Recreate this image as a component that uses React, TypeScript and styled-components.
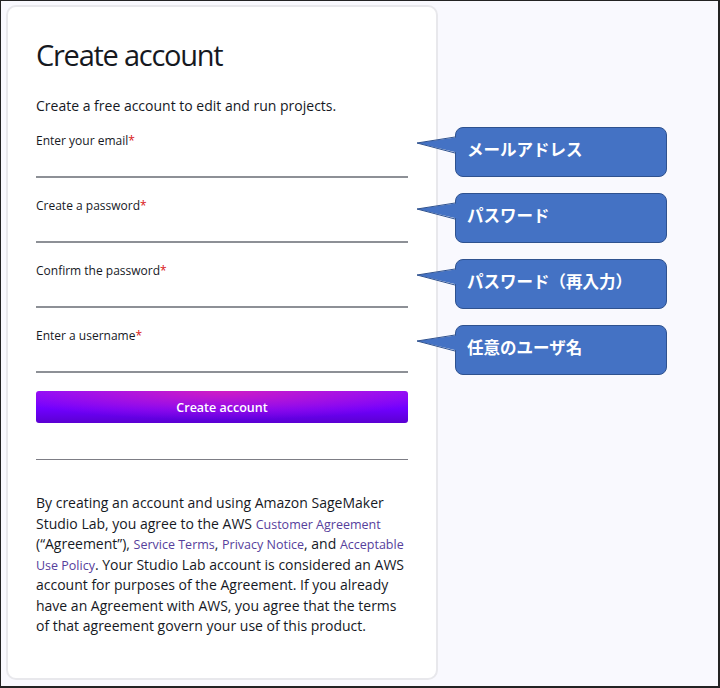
import React from "react"
import styled, { createGlobalStyle } from "styled-components"

// Data
const fields = [
  { id: "email", label: "Enter your email", type: "email" },
  { id: "password", label: "Create a password", type: "password" },
  { id: "confirm", label: "Confirm the password", type: "password" },
  { id: "username", label: "Enter a username", type: "text" },
]

const notes = ["メールアドレス", "パスワード", "パスワード（再入力）", "任意のユーザ名"]

const Callout: React.FC<{ text: string }> = ({ text }) => (
  <Note>
    {text}
    <Tail width="44" height="20" viewBox="0 0 44 20" aria-hidden>
      <polygon points="43,1 1,7 43,17" fill="#4472c4" />
      <polyline points="39,1 1,7 39,17" fill="none" stroke="#2f528f" strokeWidth="1" />
    </Tail>
  </Note>
)

const App: React.FC = () => {
  return (
    <>
      <GlobalStyle />
      <Frame>
        <Card>
          <Title>Create account</Title>
          <Lead>Create a free account to edit and run projects.</Lead>

          <Form onSubmit={(e) => e.preventDefault()}>
            {fields.map(({ id, label, type }) => (
              <Field key={id}>
                <Label htmlFor={id}>
                  {label}
                  <Required>*</Required>
                </Label>
                <Input id={id} type={type} />
              </Field>
            ))}
            <Submit type="submit">Create account</Submit>
          </Form>

          <Divider />

          <Legal>
            By creating an account and using Amazon SageMaker Studio Lab, you agree to the AWS{" "}
            <LegalLink href="#">Customer Agreement</LegalLink> (“Agreement”),{" "}
            <LegalLink href="#">Service Terms</LegalLink>, <LegalLink href="#">Privacy Notice</LegalLink>, and{" "}
            <LegalLink href="#">Acceptable Use Policy</LegalLink>. Your Studio Lab account is considered an AWS
            account for purposes of the Agreement. If you already have an Agreement with AWS, you agree that the
            terms of that agreement govern your use of this product.
          </Legal>
        </Card>

        <Notes>
          {notes.map((n) => (
            <Callout key={n} text={n} />
          ))}
        </Notes>
      </Frame>
    </>
  )
}

const GlobalStyle = createGlobalStyle`
  * { box-sizing: border-box; }
  body {
    margin: 0;
    font-family: "Open Sans", "Noto Sans", sans-serif;
    color: #16191f;
  }
`

const Frame = styled.div`
  display: flex;
  align-items: flex-start;
  width: 720px;
  height: 688px;
  padding: 4px 0 0 5px;
  background: #f9f9fe;
  border: 1px solid #232323;
  border-right-width: 2px;
  border-bottom-width: 2px;
  overflow: hidden;
`

const Card = styled.section`
  display: flex;
  flex-direction: column;
  width: 432px;
  height: 675px;
  padding: 0 28px;
  background: #fff;
  border: 2px solid #e8e8ec;
  border-radius: 10px;
`

const Title = styled.h1`
  margin: 30px 0 0;
  font-size: 29px;
  font-weight: 400;
  line-height: 36px;
  letter-spacing: -1.25px;
  color: #16191f;
`

const Lead = styled.p`
  margin: 23px 0 0;
  font-size: 14px;
  line-height: 20px;
  color: #16191f;
`

const Form = styled.form`
  display: flex;
  flex-direction: column;
  gap: 20px;
  margin-top: 17px;
`

const Field = styled.div`
  display: flex;
  flex-direction: column;
`

const Label = styled.label`
  font-size: 12px;
  line-height: 16px;
  color: #16191f;
`

const Required = styled.span`
  color: #d91515;
`

const Input = styled.input`
  height: 29px;
  padding: 0;
  border: none;
  border-bottom: 2px solid #8d9096;
  background: transparent;
  font: inherit;
  outline: none;
`

const Submit = styled.button`
  height: 32px;
  margin-top: -2px;
  border: none;
  border-radius: 3px;
  background: radial-gradient(ellipse 60% 90% at 50% 0%, rgba(214, 30, 190, 0.9), rgba(214, 30, 190, 0) 100%),
    linear-gradient(to bottom, #8a0cff 0%, #7000ff 55%, #5a00d2 100%);
  color: #fff;
  font-family: "Open Sans", sans-serif;
  font-size: 12.5px;
  font-weight: 600;
  cursor: pointer;
`

const Divider = styled.hr`
  margin: 36px 0 0;
  border: none;
  border-top: 1px solid #7d7d85;
`

const Legal = styled.p`
  margin: 33px 0 0;
  font-size: 14px;
  line-height: 20.5px;
  color: #16191f;
`

const LegalLink = styled.a`
  font-size: 12.5px;
  line-height: 1;
  color: #56409c;
  text-decoration: none;
`

const Notes = styled.div`
  display: flex;
  flex-direction: column;
  gap: 16px;
  margin: 122px 0 0 17px;
`

const Note = styled.div`
  position: relative;
  width: 212px;
  height: 50px;
  padding: 10px 0 0 11px;
  background: #4472c4;
  border: 1px solid #2f528f;
  border-radius: 8px;
  color: #fff;
  font-family: "Noto Sans CJK JP", sans-serif;
  font-size: 16.5px;
  font-weight: 700;
  line-height: 22px;
`

const Tail = styled.svg`
  position: absolute;
  left: -40px;
  top: 8px;
  overflow: visible;
`

export default App
